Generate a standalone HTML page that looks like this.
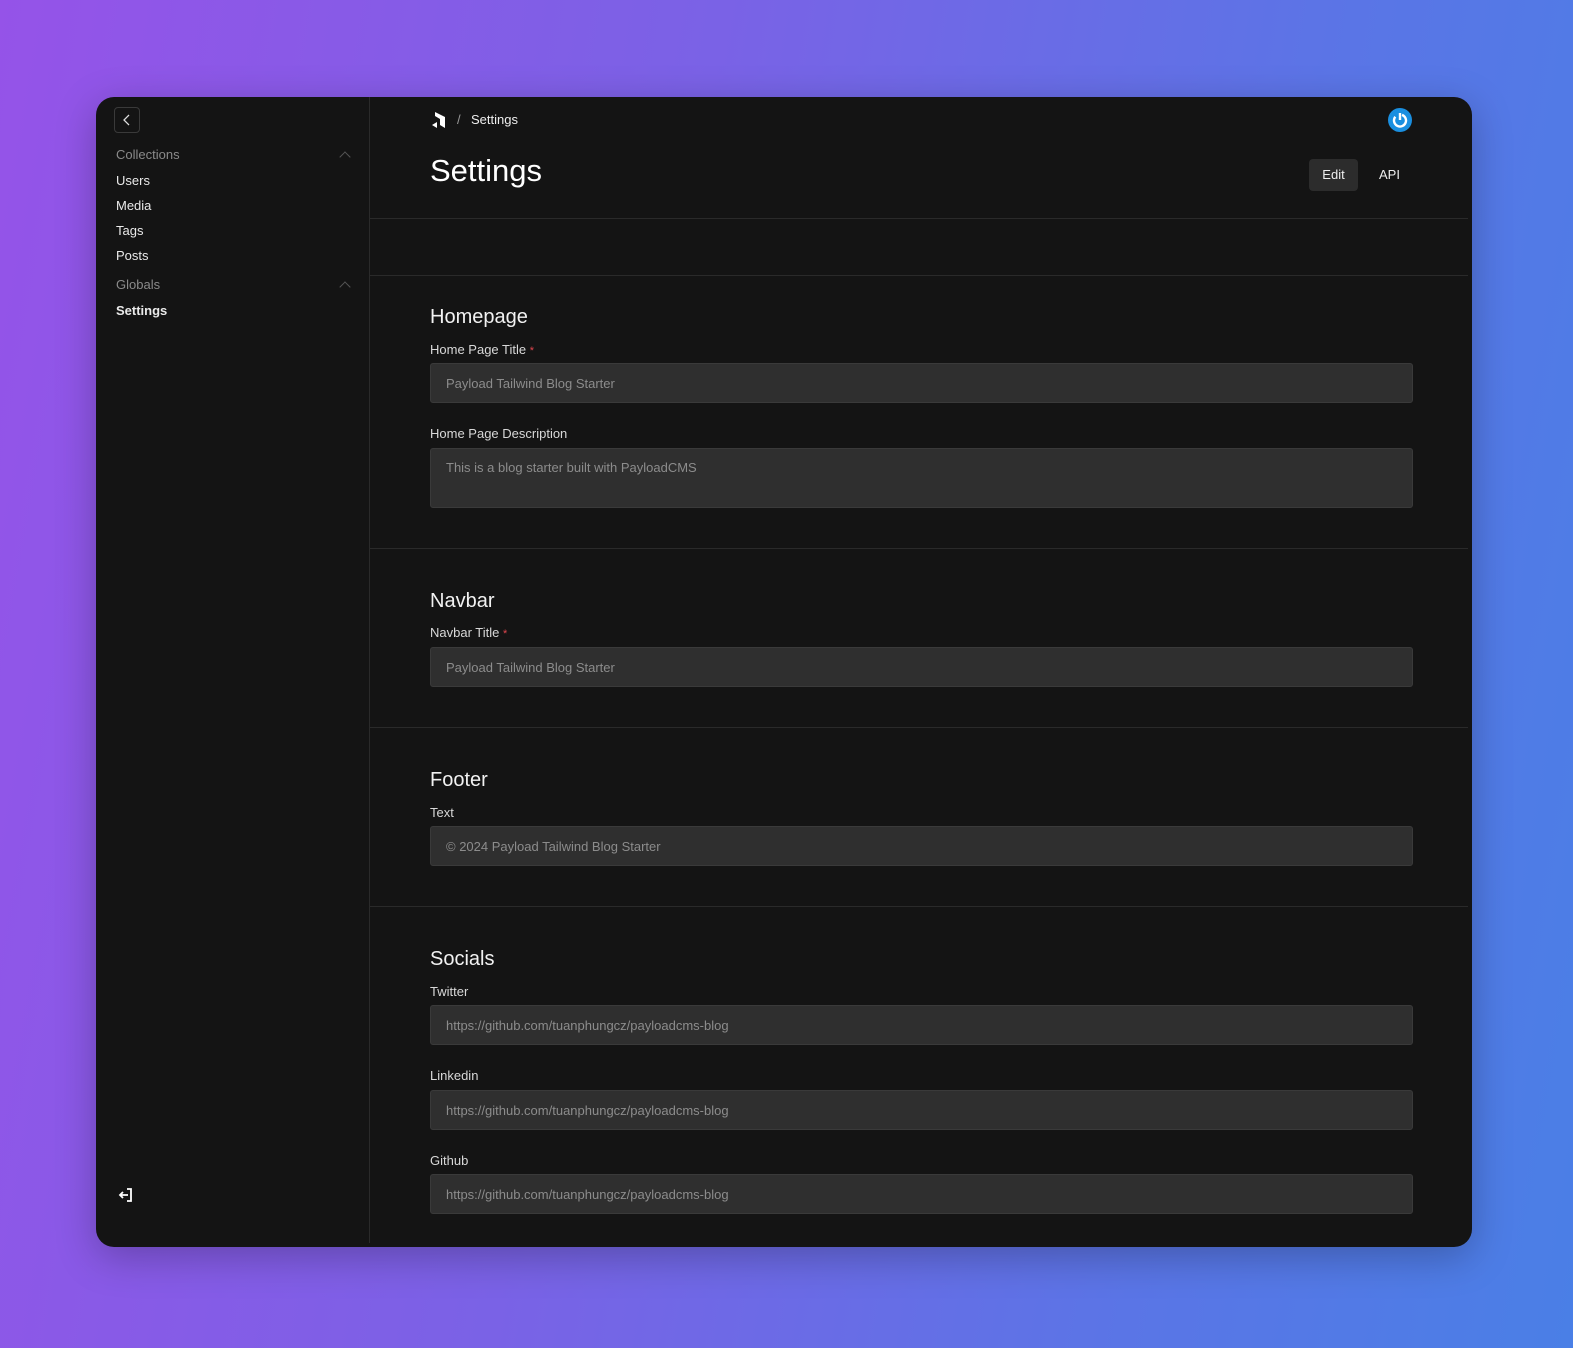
<!DOCTYPE html>
<html><head><meta charset="utf-8"><style>
*{margin:0;padding:0;box-sizing:border-box}
html,body{width:1573px;height:1348px;overflow:hidden}
body{background:linear-gradient(100deg,#9553e8 0%,#7a62e6 40%,#5a75e6 75%,#4a7fe6 100%);font-family:"Liberation Sans",sans-serif;position:relative}
.card{position:absolute;left:96px;top:97px;width:1376px;height:1150px;background:#141414;border-radius:18px;overflow:hidden;box-shadow:0 10px 40px rgba(0,0,0,.25)}
.side{position:absolute;left:0;top:0;width:274px;height:1146px;border-right:1px solid #2a2a2a}
.a{position:absolute;white-space:nowrap}
.back{left:18px;top:10px;width:26px;height:26px;border:1px solid #3a3a3a;border-radius:4px}
.grp{color:#8a8a8a;font-size:13px}
.nav{color:#eaeaea;font-size:13px}
.chev{width:8px;height:8px;border-left:1px solid #555;border-top:1px solid #555;transform:rotate(45deg)}
.hr{position:absolute;left:274px;width:1098px;height:1px;background:#2a2a2a}
.h2{color:#f2f2f2;font-size:20px}
.lbl{color:#d8d8d8;font-size:13px}
.req{color:#e0464e;font-size:11px}
.in{position:absolute;left:334px;width:983px;height:40px;background:#2f2f2f;border:1px solid #3a3a3a;border-radius:3px;color:#8c8c8c;font-size:13px;padding:12px 15px;white-space:nowrap}
</style></head><body>
<div class="card">
 <div class="side">
  <div class="a back"><svg width="26" height="26" viewBox="0 0 26 26" style="position:absolute;left:-1px;top:-1px"><path d="M15 8l-5 5 5 5" fill="none" stroke="#ddd" stroke-width="1.3"/></svg></div>
  <div class="a grp" style="left:20px;top:50px">Collections</div>
  <div class="a chev" style="left:245px;top:56px"></div>
  <div class="a nav" style="left:20px;top:76px">Users</div>
  <div class="a nav" style="left:20px;top:101px">Media</div>
  <div class="a nav" style="left:20px;top:126px">Tags</div>
  <div class="a nav" style="left:20px;top:151px">Posts</div>
  <div class="a grp" style="left:20px;top:180px">Globals</div>
  <div class="a chev" style="left:245px;top:186px"></div>
  <div class="a nav" style="left:20px;top:206px;font-weight:bold">Settings</div>
  <svg class="a" style="left:22px;top:1090px" width="16" height="16" viewBox="0 0 16 16"><path d="M9 2h4v12H9M2 8h8M5 5L2 8l3 3" fill="none" stroke="#fff" stroke-width="1.8"/></svg>
 </div>
 <svg class="a" style="left:334px;top:14px" width="18" height="18" viewBox="0 0 18 18"><path d="M5 1l10 5v11l-5-3V8L5 5z" fill="#fff"/><path d="M2 14l5-3v6z" fill="#fff"/></svg>
 <div class="a" style="left:361px;top:15px;color:#999;font-size:13px">/</div>
 <div class="a" style="left:375px;top:15px;color:#eee;font-size:13px">Settings</div>
 <div class="a" style="left:1292px;top:11px;width:24px;height:24px;border-radius:50%;background:#1a8fe0"><svg width="24" height="24" viewBox="0 0 24 24"><circle cx="12" cy="12.5" r="6" fill="none" stroke="#fff" stroke-width="2.4" stroke-dasharray="30 8" transform="rotate(-70 12 12.5)"/><path d="M12 5v7" stroke="#fff" stroke-width="2.4"/></svg></div>
 <div class="a" style="left:334px;top:56px;color:#fff;font-size:31px">Settings</div>
 <div class="a" style="left:1213px;top:62px;width:49px;height:32px;background:#2c2c2c;border-radius:4px;color:#eee;font-size:13px;text-align:center;line-height:32px">Edit</div>
 <div class="a" style="left:1283px;top:62px;color:#eee;font-size:13px;line-height:32px">API</div>
 <div class="hr" style="top:121px"></div>
 <div class="hr" style="top:178px"></div>
 <div class="a h2" style="left:334px;top:209px">Homepage</div>
 <div class="a lbl" style="left:334px;top:245px">Home Page Title <span class="req">*</span></div>
 <div class="in" style="top:266px">Payload Tailwind Blog Starter</div>
 <div class="a lbl" style="left:334px;top:329px">Home Page Description</div>
 <div class="in" style="top:351px;height:60px;padding-top:11px">This is a blog starter built with PayloadCMS</div>
 <div class="hr" style="top:451px"></div>
 <div class="a h2" style="left:334px;top:493px">Navbar</div>
 <div class="a lbl" style="left:334px;top:528px">Navbar Title <span class="req">*</span></div>
 <div class="in" style="top:550px">Payload Tailwind Blog Starter</div>
 <div class="hr" style="top:630px"></div>
 <div class="a h2" style="left:334px;top:672px">Footer</div>
 <div class="a lbl" style="left:334px;top:708px">Text</div>
 <div class="in" style="top:729px">© 2024 Payload Tailwind Blog Starter</div>
 <div class="hr" style="top:809px"></div>
 <div class="a h2" style="left:334px;top:851px">Socials</div>
 <div class="a lbl" style="left:334px;top:887px">Twitter</div>
 <div class="in" style="top:908px">https://github.com/tuanphungcz/payloadcms-blog</div>
 <div class="a lbl" style="left:334px;top:971px">Linkedin</div>
 <div class="in" style="top:993px">https://github.com/tuanphungcz/payloadcms-blog</div>
 <div class="a lbl" style="left:334px;top:1056px">Github</div>
 <div class="in" style="top:1077px">https://github.com/tuanphungcz/payloadcms-blog</div>
</div>
</body></html>
